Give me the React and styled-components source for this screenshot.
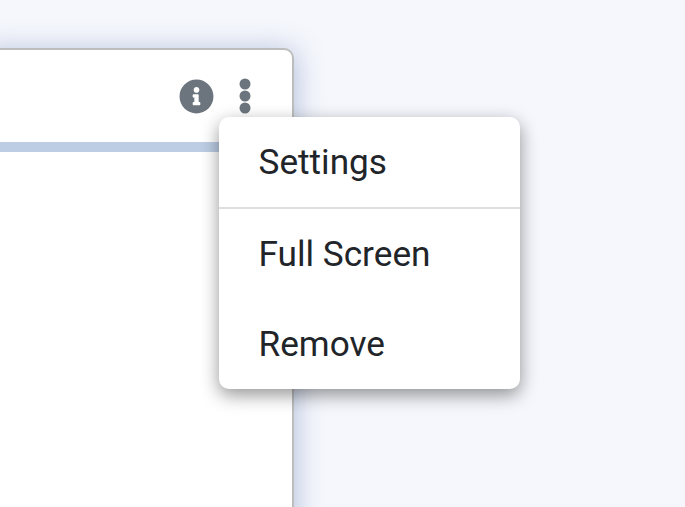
import React from 'react'
import styled, { createGlobalStyle } from 'styled-components';
import { FaInfoCircle } from 'react-icons/fa';

const GlobalStyle = createGlobalStyle`
html, body {
    margin: 0;
    height: 100%;
    overflow: hidden;
    background: #f5f7fc;
    font-family: Roboto, "Liberation Sans", sans-serif;
}
`;

function Kebab() {
  return (
    <svg width="12" height="36" viewBox="0 0 12 36" fill="#6c757d">
      <circle cx="6" cy="6" r="5.5" />
      <circle cx="6" cy="18" r="5.5" />
      <circle cx="6" cy="30" r="5.5" />
    </svg>
  );
}

function App() {
  return (
    <Page>
      <GlobalStyle />
      <Card>
        <CardHeader>
          <InfoIcon />
          <MenuButton><Kebab /></MenuButton>
        </CardHeader>
        <ProgressBar />
        <Menu>
          <MenuItem>Settings</MenuItem>
          <Divider />
          <MenuItem>Full Screen</MenuItem>
          <MenuItem>Remove</MenuItem>
        </Menu>
      </Card>
    </Page>
  );
}

export default App

const Page = styled.div`
height: 507px;
padding-top: 48px;
box-sizing: border-box;
overflow: hidden;
`;

const Card = styled.div`
position: relative;
width: 313px;
height: 520px;
margin-left: -19px;
box-sizing: border-box;
background: #fff;
border: 2px solid #bdbdbd;
border-left: 0;
border-bottom: 0;
border-radius: 0 10px 0 0;
box-shadow: 2px 2px 28px rgba(78, 105, 170, 0.38);
`;

const CardHeader = styled.div`
display: flex;
justify-content: flex-end;
align-items: center;
gap: 25px;
height: 92px;
padding-right: 41px;
`;

const InfoIcon = styled(FaInfoCircle)`
width: 35px;
height: 35px;
color: #6c757d;
`;

const MenuButton = styled.div`
display: flex;
margin-top: -1px;
`;

const ProgressBar = styled.div`
height: 10px;
background: #bccde4;
`;

const Menu = styled.div`
position: absolute;
top: 67px;
left: 238px;
width: 301px;
height: 272px;
box-sizing: border-box;
background: #fff;
border-radius: 10px;
box-shadow: 0 6px 18px rgba(0, 0, 0, 0.42);
`;

const MenuItem = styled.div`
height: 90px;
line-height: 90px;
padding-left: 39.5px;
font-size: 35.2px;
color: #212529;
`;

const Divider = styled.div`
height: 2px;
background: #dedede;
`;
